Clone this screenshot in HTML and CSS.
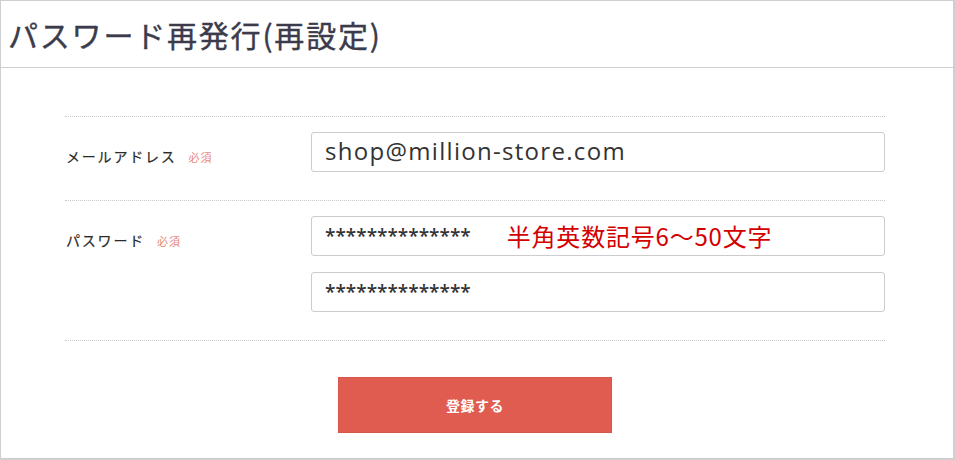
FILE: index.html
```html
<!DOCTYPE html>
<html lang="ja">
<head>
<meta charset="utf-8">
<title>パスワード再発行(再設定)</title>
<link rel="stylesheet" href="styles.css">
</head>
<body>
<div class="frame">
  <header class="page-header">
    <h1 class="page-title">パスワード再発行(再設定)</h1>
  </header>
  <form class="form">
    <div class="row">
      <div class="label">メールアドレス<span class="req">必須</span></div>
      <div class="fields">
        <div class="field"><span class="value">shop@million-store.com</span></div>
      </div>
    </div>
    <div class="row row-last">
      <div class="label">パスワード<span class="req">必須</span></div>
      <div class="fields">
        <div class="field"><span class="mask">**************</span><span class="note">半角英数記号6～50文字</span></div>
        <div class="field"><span class="mask">**************</span></div>
      </div>
    </div>
    <div class="actions">
      <button type="button" class="submit">登録する</button>
    </div>
  </form>
</div>
</body>
</html>
```
FILE: styles.css
```css
html, body {
  margin: 0;
  padding: 0;
  background: #fff;
}

.frame {
  box-sizing: border-box;
  width: 955px;
  height: 460px;
  border-top: 1px solid #cfcfcf;
  border-left: 1px solid #cfcfcf;
  border-right: 2px solid #cfcfcf;
  border-bottom: 2px solid #cfcfcf;
  font-family: "Noto Sans CJK JP", "Noto Sans", sans-serif;
  color: #333;
  overflow: hidden;
}

.page-header {
  box-sizing: border-box;
  height: 67px;
  border-bottom: 1px solid #cfcfcf;
  display: flex;
  align-items: center;
  padding-left: 7px;
}

.page-title {
  margin: 0;
  font-size: 30px;
  font-weight: 400;
  letter-spacing: 1.8px;
  color: #3b3b4b;
  line-height: 1;
  padding-bottom: 1px;
  -webkit-text-stroke: 0.4px #3b3b4b;
}

.form {
  width: 820px;
  margin: 48px 0 0 64px;
}

.row {
  display: grid;
  grid-template-columns: 246px 1fr;
  border-top: 1px dotted #c8c8c8;
  padding: 15px 0 28px;
}

.row-last {
  border-bottom: 1px dotted #c8c8c8;
}

.label {
  padding-top: 14px;
  font-size: 14px;
  line-height: 20px;
  letter-spacing: 1.8px;
  color: #2a2a2a;
  padding-left: 1px;
  -webkit-text-stroke: 0.2px #2a2a2a;
}

.req {
  margin-left: 12px;
  font-size: 11px;
  letter-spacing: 1px;
  color: #e8877a;
  -webkit-text-stroke: 0;
}

.fields {
  display: flex;
  flex-direction: column;
  gap: 16px;
}

.field {
  box-sizing: border-box;
  height: 40px;
  border: 1px solid #cccccc;
  border-radius: 3px;
  display: flex;
  align-items: center;
  padding-left: 13px;
  background: #fff;
}

.value {
  font-family: "Open Sans", "Noto Sans", sans-serif;
  font-size: 24px;
  letter-spacing: 1.3px;
  color: #333;
  line-height: 1;
  padding-bottom: 2px;
}

.mask {
  font-family: "Open Sans", "Noto Sans", sans-serif;
  font-size: 19px;
  font-weight: 600;
  letter-spacing: 0;
  color: #333;
  line-height: 1;
}

.note {
  margin-left: 36px;
  font-size: 24px;
  letter-spacing: 0.8px;
  line-height: 1;
  color: #d40000;
}

.actions {
  display: flex;
  justify-content: center;
  padding-top: 36px;
}

.submit {
  box-sizing: border-box;
  width: 274px;
  height: 56px;
  background: #e05c50;
  border: 1px solid #d9554a;
  color: #fff;
  font-family: "Noto Sans CJK JP", "Noto Sans", sans-serif;
  font-size: 14px;
  font-weight: 700;
  letter-spacing: 0.5px;
  cursor: pointer;
  padding: 0;
}
```
